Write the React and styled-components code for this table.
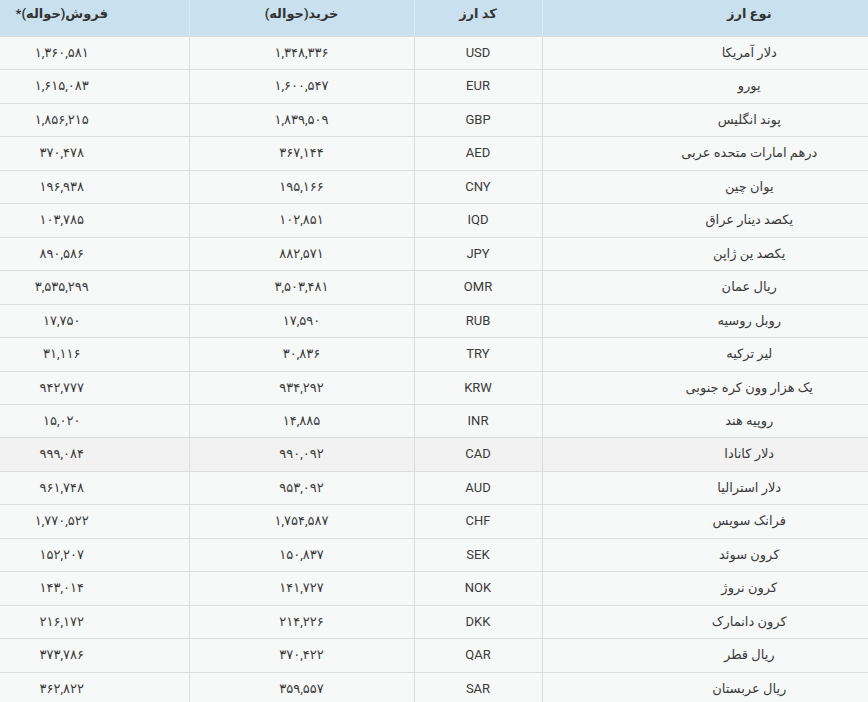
import React from "react";
import styled, { createGlobalStyle } from "styled-components";

const GlobalStyle = createGlobalStyle`
    html, body {
        margin: 0;
        padding: 0;
        background: #fff;
        overflow: hidden;
    }
    body {
        font-family: "Roboto", "DejaVu Sans", sans-serif;
        font-size: 13px;
        color: #333;
    }
`;

const rates = [
    ["دلار آمریکا", "USD", "1,348,336", "1,360,581"],
    ["یورو", "EUR", "1,600,547", "1,615,083"],
    ["پوند انگلیس", "GBP", "1,839,509", "1,856,215"],
    ["درهم امارات متحده عربی", "AED", "367,144", "370,478"],
    ["یوان چین", "CNY", "195,166", "196,938"],
    ["یکصد دینار عراق", "IQD", "102,851", "103,785"],
    ["یکصد ین ژاپن", "JPY", "882,571", "890,586"],
    ["ریال عمان", "OMR", "3,503,481", "3,535,299"],
    ["روبل روسیه", "RUB", "17,590", "17,750"],
    ["لیر ترکیه", "TRY", "30,836", "31,116"],
    ["یک هزار وون کره جنوبی", "KRW", "934,292", "942,777"],
    ["روپیه هند", "INR", "14,885", "15,020"],
    ["دلار کانادا", "CAD", "990,092", "999,084"],
    ["دلار استرالیا", "AUD", "953,092", "961,748"],
    ["فرانک سویس", "CHF", "1,754,587", "1,770,522"],
    ["کرون سوئد", "SEK", "150,837", "152,207"],
    ["کرون نروژ", "NOK", "141,727", "143,014"],
    ["کرون دانمارک", "DKK", "214,226", "216,172"],
    ["ریال قطر", "QAR", "370,422", "373,786"],
    ["ریال عربستان", "SAR", "359,557", "362,822"],
];

// persian digits, keep the latin comma like the site does
const toFa = (s) => s.replace(/\d/g, (d) => "۰۱۲۳۴۵۶۷۸۹"[d]);

const App = () => {
    return (
        <>
            <GlobalStyle />
            <Viewport dir="rtl">
                <Table>
                    <colgroup>
                        <col style={{ width: 414 }} />
                        <col style={{ width: 128 }} />
                        <col style={{ width: 225 }} />
                        <col style={{ width: 254 }} />
                    </colgroup>
                    <thead>
                        <tr>
                            <Th>نوع ارز</Th>
                            <Th>کد ارز</Th>
                            <Th>خرید(حواله)</Th>
                            <Th>فروش(حواله)*</Th>
                        </tr>
                    </thead>
                    <tbody>
                        {rates.map(([name, code, buy, sell]) => (
                            <Row key={code} $active={code === "CAD"}>
                                <Td>{name}</Td>
                                <Td $latin>{code}</Td>
                                <Td>{toFa(buy)}</Td>
                                <Td>{toFa(sell)}</Td>
                            </Row>
                        ))}
                    </tbody>
                </Table>
            </Viewport>
        </>
    );
};

export default App;

const Viewport = styled.div`
    width: 868px;
    height: 702px;
    overflow: hidden;
`;

const Table = styled.table`
    width: 1021px;
    margin-right: -88px;
    border-collapse: collapse;
    table-layout: fixed;
`;

const Th = styled.th`
    background: #c9e1ef;
    color: #333;
    font-weight: bold;
    font-size: 13px;
    line-height: 18px;
    padding: 5px 8px 13px;
    text-align: center;
    border-left: 1px solid #d9eaf4;
    &:last-child{
        border-left: none;
    }
`;

const Row = styled.tr`
    background: ${(p) => (p.$active ? "#f2f2f2" : "#f7f8f8")};
`;

const Td = styled.td`
    padding: 7px 8px;
    line-height: 18.45px;
    text-align: center;
    color: #3a3a3a;
    font-family: ${(p) => (p.$latin ? '"Roboto", sans-serif' : '"Roboto", "DejaVu Sans", sans-serif')};
    border-top: 1px solid #dcdcdc;
    border-left: 1px solid #dcdcdc;
    white-space: nowrap;
    &:last-child{
        border-left: none;
    }
`;
